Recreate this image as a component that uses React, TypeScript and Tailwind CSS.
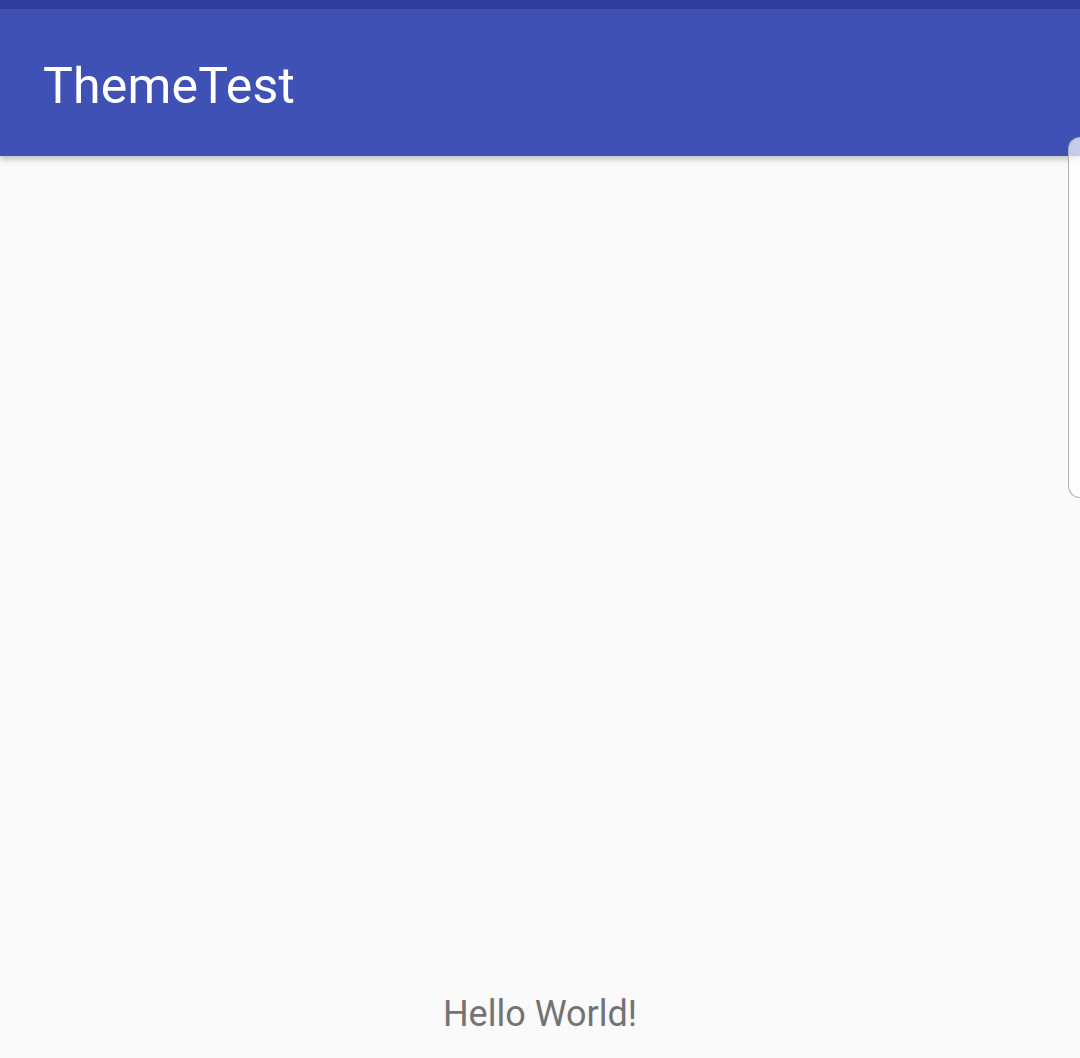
import React from "react";

export default function App() {
  return (
    <div className="relative flex h-[1058px] w-[1080px] flex-col overflow-hidden bg-[#fafafa]" style={{ fontFamily: "Roboto, 'Noto Sans', sans-serif" }}>
      <div className="h-[9px] bg-[#303f9f]" />
      <div className="relative z-10 flex h-[147px] items-center bg-[#3f51b5] pl-[43px] pt-[6px] shadow-[0_3px_6px_rgba(0,0,0,0.25)]">
        <span className="text-[50px] leading-none tracking-[0.2px] text-white">ThemeTest</span>
      </div>
      <div className="flex flex-1 flex-col items-center justify-end pb-[22px]">
        <span className="text-[36px] leading-[44px] text-[#737373]">Hello World!</span>
      </div>
      <div className="absolute right-0 top-[137px] z-20 h-[361px] w-[12px] rounded-l-[14px] border border-r-0 border-[#b0b0b0] bg-white/70" />
    </div>
  );
}
